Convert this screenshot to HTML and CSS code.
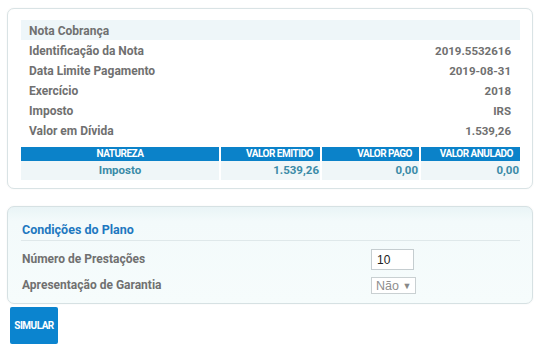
FILE: index.html
```html
<!DOCTYPE html>
<html>
<head>
<meta charset="utf-8">
<link rel="stylesheet" href="styles.css">
</head>
<body>
<div class="card card-nota">
  <div class="row band"><span class="lbl">Nota Cobrança</span></div>
  <div class="row"><span class="lbl">Identificação da Nota</span><span class="val">2019.5532616</span></div>
  <div class="row"><span class="lbl">Data Limite Pagamento</span><span class="val">2019-08-31</span></div>
  <div class="row"><span class="lbl">Exercício</span><span class="val">2018</span></div>
  <div class="row"><span class="lbl">Imposto</span><span class="val">IRS</span></div>
  <div class="row"><span class="lbl">Valor em Dívida</span><span class="val">1.539,26</span></div>
  <div class="tbl">
    <div class="th center">NATUREZA</div>
    <div class="th">VALOR EMITIDO</div>
    <div class="th">VALOR PAGO</div>
    <div class="th">VALOR ANULADO</div>
    <div class="td center">Imposto</div>
    <div class="td">1.539,26</div>
    <div class="td">0,00</div>
    <div class="td">0,00</div>
  </div>
</div>

<div class="card card-plano">
  <div class="plano-title">Condições do Plano</div>
  <div class="field f1">
    <span class="flbl">Número de Prestações</span>
    <span class="input">10</span>
  </div>
  <div class="field f2">
    <span class="flbl">Apresentação de Garantia</span>
    <span class="select">Não <span class="arrow">▼</span></span>
  </div>
</div>

<div class="actions"><span class="btn">SIMULAR</span></div>
</body>
</html>
```
FILE: styles.css
```css
* { box-sizing: border-box; }
body {
  margin: 0;
  padding: 8px 13px 0 7px;
  font-family: Roboto, "Liberation Sans", sans-serif;
  background: #fff;
  width: 546px;
}
.card {
  width: 526px;
  border: 1px solid #d9e3e5;
  border-radius: 7px;
  box-shadow: 0 0 2px rgba(0,0,0,0.06);
}
.card-nota {
  height: 181px;
  padding: 11px 12px 0 13px;
  background: #fff;
}
.row {
  display: flex;
  justify-content: space-between;
  align-items: center;
  height: 20px;
  padding: 1px 9px 0 8px;
  font-size: 12px;
  font-weight: 700;
  color: #707070;
}
.val { font-size: 11.5px; }
.band { background: #eef6f9; }
.tbl {
  margin-top: 7px;
  display: grid;
  grid-template-columns: 198px 99px 97px 99px;
  column-gap: 2px;
}
.th {
  background: #0b82c9;
  color: #fff;
  font-size: 10px;
  font-weight: 700;
  letter-spacing: -0.5px;
  height: 14px;
  line-height: 14px;
  text-align: right;
  padding-right: 7px;
}
.td {
  background: #eff6f8;
  color: #3b8ba7;
  font-size: 11.5px;
  font-weight: 700;
  height: 19px;
  line-height: 19px;
  text-align: right;
  padding-right: 1px;
}
.center { text-align: center; padding-right: 0; }

.card-plano {
  margin-top: 17px;
  height: 98px;
  padding: 0 12px 0 13px;
  background: linear-gradient(#e9f4f6 0px, #f3fafb 14px, #f6fcfc 100%);
  border-color: #d6e1e3;
}
.plano-title {
  height: 34px;
  padding: 15px 0 0 1px;
  font-size: 12.5px;
  font-weight: 700;
  color: #1e78c0;
  border-bottom: 1px solid #dfe8ea;
  line-height: 15px;
}
.field {
  display: flex;
  align-items: flex-start;
  font-size: 12px;
  font-weight: 700;
  color: #707070;
  padding-left: 1px;
}
.flbl { width: 349px; padding-top: 2px; }
.f1 { margin-top: 8px; height: 21px; }
.f1 .flbl { line-height: 16px; }
.f2 { margin-top: 7px; height: 17px; }
.f2 .flbl { line-height: 12px; }
.input {
  width: 43px;
  height: 21px;
  border: 1px solid #c5cdd0;
  background: #fff;
  font-family: Arial, "Liberation Sans", sans-serif;
  font-size: 12px;
  font-weight: 400;
  color: #222;
  padding: 3px 0 0 5px;
}
.select {
  width: 45px;
  height: 17px;
  border: 1px solid #c9d0d2;
  background: #fff;
  font-family: Arial, "Liberation Sans", sans-serif;
  font-size: 12.5px;
  font-weight: 400;
  color: #8e8e8e;
  padding: 1px 0 0 4px;
  line-height: 14px;
  white-space: nowrap;
}
.arrow { font-size: 9px; color: #888; margin-left: 0; vertical-align: 1px; }
.actions { padding: 3px 0 0 3px; }
.btn {
  display: flex;
  align-items: center;
  justify-content: center;
  width: 48px;
  height: 37px;
  background: #0b84cf;
  border-radius: 2px;
  color: #fff;
  font-size: 10px;
  font-weight: 700;
  letter-spacing: -0.5px;
}
```
